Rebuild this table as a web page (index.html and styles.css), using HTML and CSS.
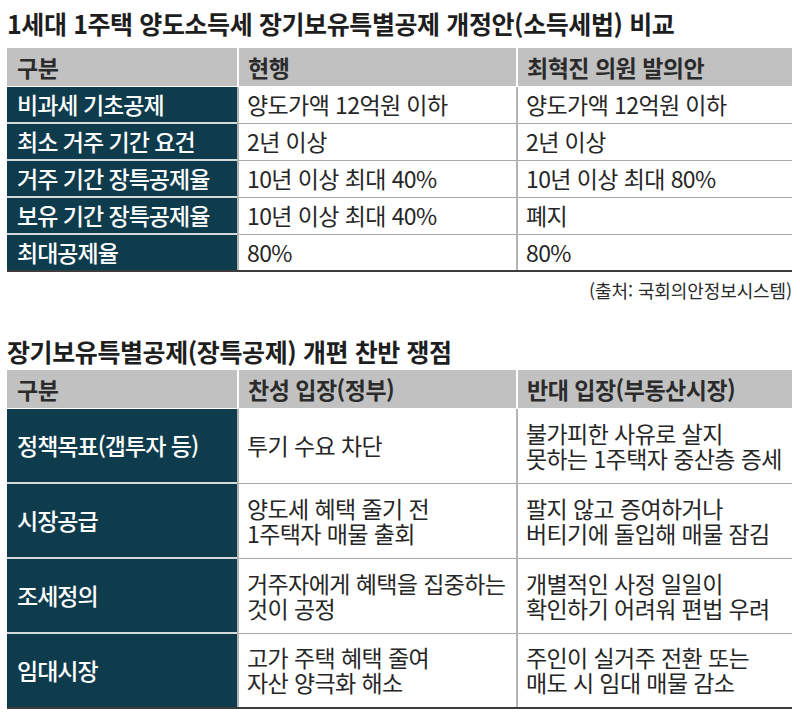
FILE: index.html
```html
<!DOCTYPE html>
<html lang="ko">
<head>
<meta charset="utf-8">
<link rel="stylesheet" href="styles.css">
</head>
<body>
<div class="page">
  <h1 class="title">1세대 1주택 양도소득세 장기보유특별공제 개정안(소득세법) 비교</h1>
  <table class="tbl tbl-1">
    <colgroup><col class="c1"><col class="c2"><col class="c3"></colgroup>
    <thead>
      <tr><th>구분</th><th>현행</th><th>최혁진 의원 발의안</th></tr>
    </thead>
    <tbody>
      <tr><th>비과세 기초공제</th><td>양도가액 12억원 이하</td><td>양도가액 12억원 이하</td></tr>
      <tr><th>최소 거주 기간 요건</th><td>2년 이상</td><td>2년 이상</td></tr>
      <tr><th>거주 기간 장특공제율</th><td>10년 이상 최대 40%</td><td>10년 이상 최대 80%</td></tr>
      <tr><th>보유 기간 장특공제율</th><td>10년 이상 최대 40%</td><td>폐지</td></tr>
      <tr><th>최대공제율</th><td>80%</td><td>80%</td></tr>
    </tbody>
  </table>
  <p class="source">(출처: 국회의안정보시스템)</p>

  <h1 class="title title-2">장기보유특별공제(장특공제) 개편 찬반 쟁점</h1>
  <table class="tbl tbl-2">
    <colgroup><col class="c1"><col class="c2"><col class="c3"></colgroup>
    <thead>
      <tr><th>구분</th><th>찬성 입장(정부)</th><th>반대 입장(부동산시장)</th></tr>
    </thead>
    <tbody>
      <tr><th>정책목표(갭투자 등)</th><td>투기 수요 차단</td><td>불가피한 사유로 살지<br>못하는 1주택자 중산층 증세</td></tr>
      <tr><th>시장공급</th><td>양도세 혜택 줄기 전<br>1주택자 매물 출회</td><td>팔지 않고 증여하거나<br>버티기에 돌입해 매물 잠김</td></tr>
      <tr><th>조세정의</th><td>거주자에게 혜택을 집중하는<br>것이 공정</td><td>개별적인 사정 일일이<br>확인하기 어려워 편법 우려</td></tr>
      <tr><th>임대시장</th><td>고가 주택 혜택 줄여<br>자산 양극화 해소</td><td>주인이 실거주 전환 또는<br>매도 시 임대 매물 감소</td></tr>
    </tbody>
  </table>
</div>
</body>
</html>
```
FILE: styles.css
```css
html, body {
  margin: 0;
  padding: 0;
  background: #ffffff;
}
body {
  font-family: "Noto Sans CJK KR", "Noto Sans", sans-serif;
  color: #2a2a2a;
}
.page {
  padding: 6px 8px 0 7px;
  width: 785px;
}
.title {
  margin: 0;
  font-size: 25px;
  font-weight: 700;
  letter-spacing: -0.4px;
  line-height: 34px;
  color: #1e1e1e;
  height: 42px;
}
.title-2 {
  margin-top: 32px;
  height: 36px;
}
.tbl {
  width: 785px;
  border-collapse: collapse;
  table-layout: fixed;
  font-size: 23px;
}
.c1 { width: 231px; }
.c2 { width: 279px; }
.c3 { width: 275px; }
.tbl th, .tbl td {
  text-align: left;
  vertical-align: middle;
  padding: 0 0 0 9px;
  line-height: 25px;
  white-space: nowrap;
}
.tbl thead th {
  background: #c1c1c1;
  color: #2b2b2b;
  font-weight: 700;
  letter-spacing: -0.5px;
  height: 38px;
  border-left: 2px solid #ffffff;
}
.tbl thead th:first-child {
  border-left: none;
  padding-left: 10px;
}
.tbl tbody th {
  background: #0e3c4d;
  color: #ffffff;
  font-weight: 500;
  letter-spacing: -1px;
  padding-left: 10px;
  border-top: 2px solid #d4d9dc;
}
.tbl tbody td {
  border-top: 1px solid #a8a8a8;
  border-left: 2px solid #b4b4b4;
  color: #262626;
  font-weight: 400;
  letter-spacing: -0.6px;
  padding-left: 8px;
}
.tbl tbody tr:first-child th,
.tbl tbody tr:first-child td {
  border-top: 1px solid #ffffff;
}
.tbl tbody tr:last-child th,
.tbl tbody tr:last-child td {
  border-bottom: 2px solid #3c3c3c;
}
.tbl-1 tbody th, .tbl-1 tbody td {
  height: 35px;
}
.tbl-2 tbody th, .tbl-2 tbody td {
  height: 73px;
}
.source {
  margin: 6px 0 0 0;
  text-align: right;
  font-size: 18px;
  letter-spacing: -0.1px;
  line-height: 24px;
  color: #2a2a2a;
}
```
